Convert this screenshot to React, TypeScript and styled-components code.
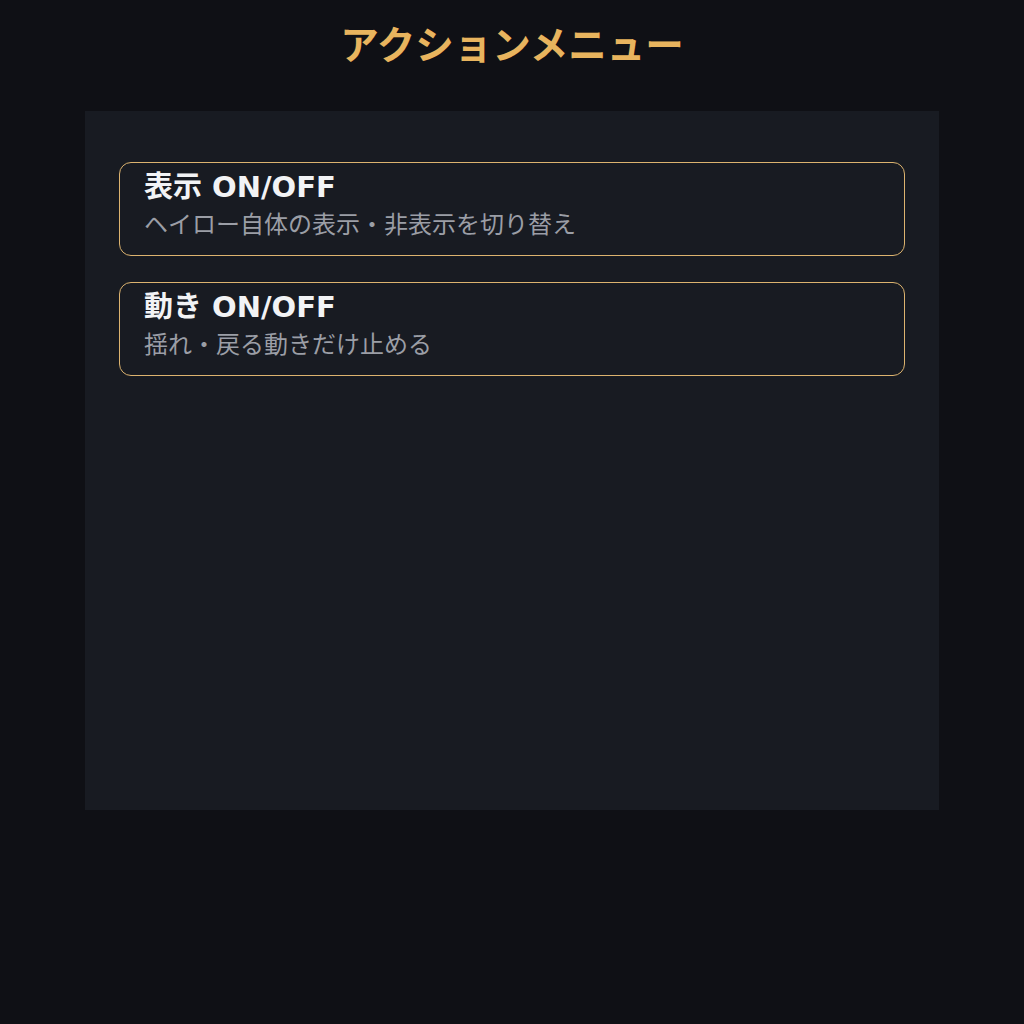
import { FC } from "react"
import styled, { createGlobalStyle } from "styled-components"

const GlobalStyle = createGlobalStyle`
  html, body {
    margin: 0;
    padding: 0;
    background: #0f1015;
  }
  body {
    font-family: "DejaVu Sans", "Noto Sans CJK JP", sans-serif;
  }
`

const items = [
  { title: "表示 ON/OFF", desc: "ヘイロー自体の表示・非表示を切り替え" },
  { title: "動き ON/OFF", desc: "揺れ・戻る動きだけ止める" },
]

const MenuItem: FC<{ title: string; desc: string }> = ({ title, desc }) => (
  <Card>
    <ItemTitle>{title}</ItemTitle>
    <ItemDesc>{desc}</ItemDesc>
  </Card>
)

const App: FC = () => {
  return (
    <Page>
      <GlobalStyle />
      <Heading>アクションメニュー</Heading>
      <Panel>
        {items.map((item) => (
          <MenuItem key={item.title} title={item.title} desc={item.desc} />
        ))}
      </Panel>
    </Page>
  )
}

const Page = styled.div`
  width: 1024px;
  height: 1024px;
  display: flex;
  flex-direction: column;
  align-items: center;
  box-sizing: border-box;
  padding-top: 18px;
`

const Heading = styled.h1`
  margin: 0;
  font-family: "Noto Sans CJK JP", sans-serif;
  font-size: 38.5px;
  line-height: 48px;
  font-weight: 700;
  color: #e8b45e;
`

const Panel = styled.section`
  margin-top: 45px;
  width: 854px;
  height: 699px;
  box-sizing: border-box;
  background: #181b22;
  padding: 51px 34px;
  display: flex;
  flex-direction: column;
  gap: 26px;
`

const Card = styled.div`
  height: 94px;
  box-sizing: border-box;
  border: 1px solid #dcb36f;
  border-radius: 12px;
  padding: 7px 24px 0;
  display: flex;
  flex-direction: column;
`

const ItemTitle = styled.div`
  font-size: 29px;
  line-height: 34px;
  font-weight: 700;
  color: #f2f3f5;
`

const ItemDesc = styled.div`
  margin-top: 3px;
  font-family: "Noto Sans CJK JP", sans-serif;
  font-size: 24px;
  line-height: 32px;
  color: #9b9ea6;
`

export default App
